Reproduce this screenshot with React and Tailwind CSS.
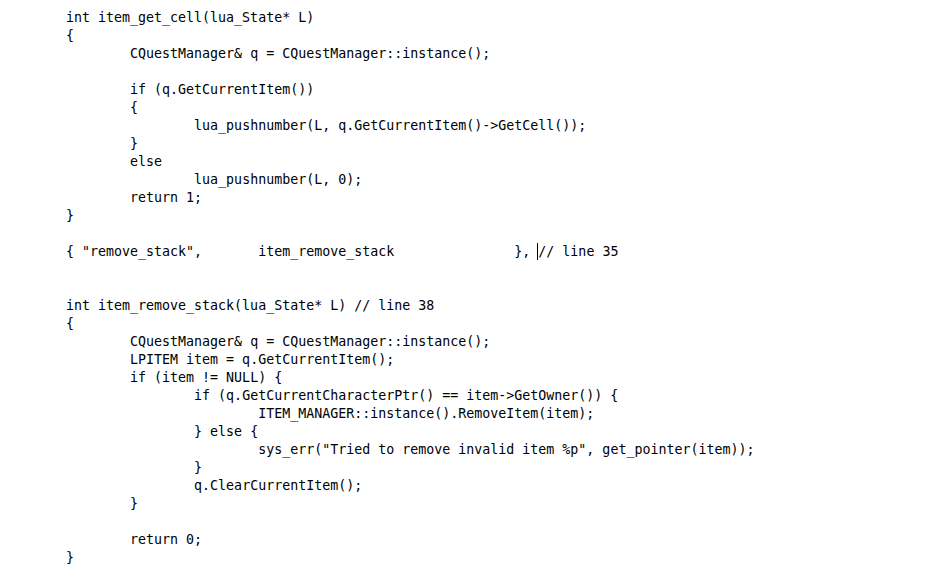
const lines = [
  "int item_get_cell(lua_State* L)",
  "{",
  "\tCQuestManager& q = CQuestManager::instance();",
  "",
  "\tif (q.GetCurrentItem())",
  "\t{",
  "\t\tlua_pushnumber(L, q.GetCurrentItem()->GetCell());",
  "\t}",
  "\telse",
  "\t\tlua_pushnumber(L, 0);",
  "\treturn 1;",
  "}",
  "",
  null,
  "",
  "",
  "int item_remove_stack(lua_State* L) // line 38",
  "{",
  "\tCQuestManager& q = CQuestManager::instance();",
  "\tLPITEM item = q.GetCurrentItem();",
  "\tif (item != NULL) {",
  "\t\tif (q.GetCurrentCharacterPtr() == item->GetOwner()) {",
  "\t\t\tITEM_MANAGER::instance().RemoveItem(item);",
  "\t\t} else {",
  '\t\t\tsys_err("Tried to remove invalid item %p", get_pointer(item));',
  "\t\t}",
  "\t\tq.ClearCurrentItem();",
  "\t}",
  "",
  "\treturn 0;",
  "}",
];

export default function App() {
  return (
    <div className="w-[928px] h-[584px] bg-white overflow-hidden">
      <pre
        className="pl-[66px] pt-[9px] m-0 text-black text-[13.3px] leading-[18px] whitespace-pre [tab-size:8]"
        style={{ fontFamily: '"DejaVu Sans Mono", monospace' }}
      >
        {lines.map((line, i) =>
          line === null ? (
            <div key={i} className="h-[18px]">
              {'{ "remove_stack",\titem_remove_stack\t\t}, '}
              {/* text cursor */}
              <span className="relative inline-block w-0">
                <span className="absolute left-[-1px] top-[-13px] w-px h-[17px] bg-black" />
              </span>
              {"// line 35"}
            </div>
          ) : (
            <div key={i} className="h-[18px]">
              {line}
            </div>
          )
        )}
      </pre>
    </div>
  );
}
